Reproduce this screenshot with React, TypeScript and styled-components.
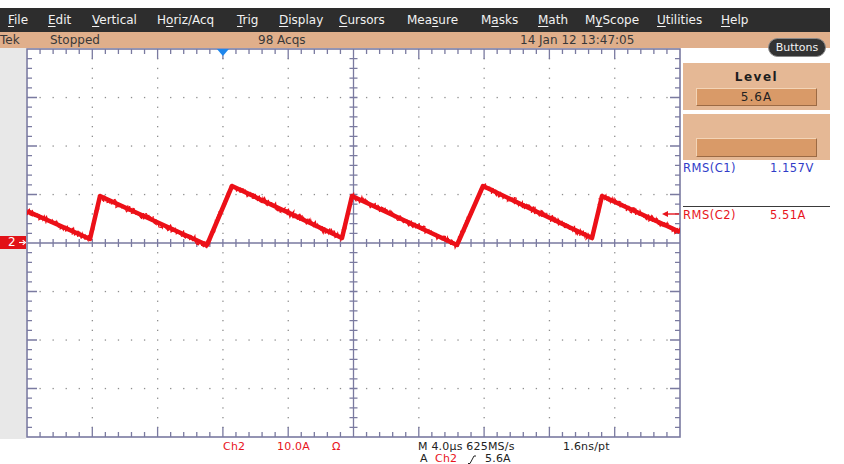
import React from "react";
import styled, { createGlobalStyle } from "styled-components";

const Global = createGlobalStyle`
  html, body { margin: 0; padding: 0; background: #ffffff; }
  body { font-family: "DejaVu Sans", "Liberation Sans", sans-serif; }
`;

const Page = styled.div`
  width: 844px;
  height: 464px;
  padding-top: 8px;
  box-sizing: border-box;
  overflow: hidden;
  display: flex;
  flex-direction: column;
  background: #ffffff;
`;

const MenuBar = styled.nav`
  width: 830px;
  height: 24px;
  flex: none;
  background: #2d2d2d;
  display: flex;
  align-items: center;
  padding-left: 8px;
  box-sizing: border-box;
`;

const MenuItem = styled.span<{ $w: number }>`
  width: ${(p) => p.$w}px;
  flex: none;
  color: #f2f2f2;
  font-size: 12px;
  line-height: 14px;
  white-space: nowrap;
  u {
    text-decoration: underline;
    text-underline-offset: 2px;
  }
`;

const StatusBar = styled.div`
  position: relative;
  width: 830px;
  height: 16px;
  flex: none;
  background: #e0af8b;
  display: flex;
  align-items: center;
  font-size: 12px;
  color: #383838;
`;

const StatusCell = styled.span<{ $w: number }>`
  width: ${(p) => p.$w}px;
  flex: none;
  white-space: nowrap;
  line-height: 14px;
`;

const ButtonsPill = styled.button`
  position: absolute;
  right: 4px;
  top: 6px;
  width: 58px;
  height: 19px;
  padding: 0;
  border-radius: 10px;
  border: 1px solid #8a8a8a;
  background: #333333;
  color: #f4f4f4;
  font-family: "DejaVu Sans", sans-serif;
  font-size: 11px;
  line-height: 17px;
  text-align: center;
  z-index: 2;
`;

const MainRow = styled.div`
  display: flex;
  height: 391px;
  flex: none;
`;

const Gutter = styled.div`
  position: relative;
  width: 26px;
  flex: none;
  background: #e8e8e8;
`;

const ChannelMarker = styled.div`
  position: absolute;
  left: 0;
  top: 188px;
  width: 26px;
  height: 13px;
  box-sizing: border-box;
  background: #e21218;
  color: #ffffff;
  font-size: 12px;
  line-height: 13px;
  display: flex;
  align-items: center;
  padding-left: 8px;
  gap: 3px;
`;

const ScopeSvg = styled.svg`
  display: block;
  flex: none;
`;

const SidePanel = styled.aside`
  width: 148px;
  flex: none;
  padding: 15px 0 0 1px;
  box-sizing: border-box;
  display: flex;
  flex-direction: column;
  background: #ffffff;
`;

const ControlBox = styled.div<{ $h: number; $pt: number; $mt: number }>`
  width: 147px;
  height: ${(p) => p.$h}px;
  margin-top: ${(p) => p.$mt}px;
  padding-top: ${(p) => p.$pt}px;
  box-sizing: border-box;
  background: #e5b895;
  display: flex;
  flex-direction: column;
  align-items: center;
`;

const BoxTitle = styled.div`
  font-weight: bold;
  font-size: 12px;
  line-height: 14px;
  letter-spacing: 1.5px;
  color: #1e1e1e;
  margin-bottom: 4px;
`;

const ValueBar = styled.div<{ $h: number }>`
  width: 121px;
  height: ${(p) => p.$h}px;
  box-sizing: border-box;
  background: #d99a68;
  border: 1px solid;
  border-color: #f3d4b6 #9c6a44 #9c6a44 #f3d4b6;
  font-size: 12px;
  letter-spacing: 1px;
  color: #222222;
  display: flex;
  align-items: center;
  justify-content: center;
`;

const MeasRow = styled.div<{ $color: string; $mt: number }>`
  display: grid;
  grid-template-columns: 87px auto;
  margin-top: ${(p) => p.$mt}px;
  font-size: 11.5px;
  line-height: 13px;
  letter-spacing: 0.5px;
  color: ${(p) => p.$color};
`;

const Divider = styled.div`
  width: 147px;
  height: 1px;
  margin-top: 31px;
  background: #3a3a3a;
`;

const Readout = styled.div`
  padding-top: 2px;
  display: flex;
  flex-direction: column;
`;

const ReadoutLine = styled.div<{ $cols: string }>`
  display: grid;
  grid-template-columns: ${(p) => p.$cols};
  font-size: 11px;
  line-height: 12px;
  letter-spacing: 0.2px;
  color: #222222;
  white-space: nowrap;
`;

const RedText = styled.span`
  color: #e8141c;
`;

const SlopeIcon = styled.svg`
  display: block;
  margin-top: 2px;
`;

/* ---------- graticule geometry ---------- */
const GX = 1;
const GY = 1;
const GW = 653;
const GH = 388;
const DW = GW / 10;
const DH = GH / 8;
const CX = GX + 5 * DW;
const CY = GY + 4 * DH;
const AXIS = "#7a7aa0";

const buildDots = () => {
  const dots: { x: number; y: number }[] = [];
  for (let j = 1; j < 8; j++) {
    if (j === 4) continue;
    for (let k = 1; k < 50; k++) dots.push({ x: GX + (k * DW) / 5, y: GY + j * DH });
  }
  for (let i = 1; i < 10; i++) {
    if (i === 5) continue;
    for (let m = 1; m < 40; m++) {
      if (m % 5 === 0) continue;
      dots.push({ x: GX + i * DW, y: GY + (m * DH) / 5 });
    }
  }
  return dots;
};

const buildTicks = () => {
  let d = "";
  for (let k = 1; k < 50; k++) {
    const x = GX + (k * DW) / 5;
    const len = k % 5 === 0 ? 10 : 5;
    d += `M${x} ${GY}v${len}M${x} ${GY + GH}v${-len}`;
    d += `M${x} ${CY - 4}v8`;
  }
  for (let m = 1; m < 40; m++) {
    const y = GY + (m * DH) / 5;
    const len = m % 5 === 0 ? 10 : 5;
    d += `M${GX} ${y}h${len}M${GX + GW} ${y}h${-len}`;
    d += `M${CX - 4} ${y}h8`;
  }
  d += `M${GX} ${CY}H${GX + GW}M${CX} ${GY}V${GY + GH}`;
  return d;
};

const TRACE: [number, number][] = [
  [1, 163],
  [64, 191],
  [74, 148],
  [181, 197],
  [206, 138],
  [316, 190],
  [326, 148],
  [431, 197],
  [457, 138],
  [566, 190],
  [576, 148],
  [654, 184],
];

let seed = 9731;
const rnd = () => {
  seed = (seed * 1103515245 + 12345) & 0x7fffffff;
  return seed / 0x7fffffff;
};

const buildFuzz = () => {
  const pts: string[] = [];
  for (let s = 0; s < TRACE.length - 1; s++) {
    const [x1, y1] = TRACE[s];
    const [x2, y2] = TRACE[s + 1];
    const len = Math.hypot(x2 - x1, y2 - y1);
    const n = Math.max(2, Math.round(len / 0.8));
    for (let i = 0; i < n; i++) {
      const t = i / n;
      const x = x1 + (x2 - x1) * t + (rnd() - 0.5) * 2;
      const y = y1 + (y2 - y1) * t + (rnd() - 0.5) * 7.5;
      pts.push(`${x.toFixed(1)},${y.toFixed(1)}`);
    }
  }
  return pts.join(" ");
};

const DOTS = buildDots();
const TICKS = buildTicks();
const FUZZ = buildFuzz();
const TRACE_PTS = TRACE.map(([x, y]) => `${x},${y}`).join(" ");

const Graticule: React.FC = () => (
  <ScopeSvg width={656} height={391} viewBox="0 0 656 391">
    <defs>
      <clipPath id="plotArea">
        <rect x={GX} y={GY} width={GW} height={GH} />
      </clipPath>
    </defs>
    <rect x={0} y={0} width={656} height={391} fill="#ffffff" />
    {DOTS.map((p, i) => (
      <rect key={i} x={p.x - 0.6} y={p.y - 0.6} width={1.3} height={1.3} fill="#8e8e8e" />
    ))}
    <path d={TICKS} stroke={AXIS} strokeWidth={1.3} fill="none" />
    <rect x={GX} y={GY} width={GW} height={GH} fill="none" stroke={AXIS} strokeWidth={1.6} />
    <g clipPath="url(#plotArea)">
      <polyline points={TRACE_PTS} fill="none" stroke="#ec1018" strokeWidth={4.5} strokeLinejoin="round" />
      <polyline points={FUZZ} fill="none" stroke="#ec1018" strokeWidth={1.2} />
    </g>
    <polygon points={`${GX + 3 * DW - 6},${GY} ${GX + 3 * DW + 6},${GY} ${GX + 3 * DW},${GY + 7}`} fill="#1e86ec" />
    <path d="M641 166H653" stroke="#e8141c" strokeWidth={1.4} />
    <polygon points="636,166 642,163 642,169" fill="#e8141c" />
  </ScopeSvg>
);

const MENU: { label: React.ReactNode; w: number }[] = [
  { label: <><u>F</u>ile</>, w: 40 },
  { label: <><u>E</u>dit</>, w: 44 },
  { label: <><u>V</u>ertical</>, w: 65 },
  { label: <>H<u>o</u>riz/Acq</>, w: 80 },
  { label: <><u>T</u>rig</>, w: 42 },
  { label: <><u>D</u>isplay</>, w: 60 },
  { label: <><u>C</u>ursors</>, w: 68 },
  { label: <>Mea<u>s</u>ure</>, w: 74 },
  { label: <>M<u>a</u>sks</>, w: 57 },
  { label: <><u>M</u>ath</>, w: 47 },
  { label: <>M<u>y</u>Scope</>, w: 72 },
  { label: <><u>U</u>tilities</>, w: 64 },
  { label: <><u>H</u>elp</>, w: 40 },
];

export default function App() {
  return (
    <>
      <Global />
      <Page>
        <MenuBar>
          {MENU.map((m, i) => (
            <MenuItem key={i} $w={m.w}>
              {m.label}
            </MenuItem>
          ))}
        </MenuBar>
        <StatusBar>
          <StatusCell $w={50}>Tek</StatusCell>
          <StatusCell $w={208}>Stopped</StatusCell>
          <StatusCell $w={262}>98 Acqs</StatusCell>
          <StatusCell $w={140}>14 Jan 12 13:47:05</StatusCell>
          <ButtonsPill>Buttons</ButtonsPill>
        </StatusBar>
        <MainRow>
          <Gutter>
            <ChannelMarker>
              <span>2</span>
              <svg width="8" height="7" viewBox="0 0 8 7">
                <path d="M0 3.5H6" stroke="#fff" strokeWidth={1.2} />
                <path d="M4 1L7 3.5L4 6" stroke="#fff" strokeWidth={1.2} fill="none" />
              </svg>
            </ChannelMarker>
          </Gutter>
          <Graticule />
          <SidePanel>
            <ControlBox $h={47} $pt={7} $mt={0}>
              <BoxTitle>Level</BoxTitle>
              <ValueBar $h={18}>5.6A</ValueBar>
            </ControlBox>
            <ControlBox $h={46} $pt={24} $mt={4}>
              <ValueBar $h={19} />
            </ControlBox>
            <MeasRow $color="#2f3cc8" $mt={2}>
              <span>RMS(C1)</span>
              <span>1.157V</span>
            </MeasRow>
            <Divider />
            <MeasRow $color="#e8141c" $mt={2}>
              <span>RMS(C2)</span>
              <span>5.51A</span>
            </MeasRow>
          </SidePanel>
        </MainRow>
        <Readout>
          <ReadoutLine $cols="223px 54px 55px 86px 145px auto">
            <span />
            <RedText>Ch2</RedText>
            <RedText>10.0A</RedText>
            <RedText>Ω</RedText>
            <span>M 4.0µs 625MS/s</span>
            <span>1.6ns/pt</span>
          </ReadoutLine>
          <ReadoutLine $cols="420px 15px 33px 17px auto">
            <span />
            <span>A</span>
            <RedText>Ch2</RedText>
            <SlopeIcon width="8" height="9" viewBox="0 0 8 9">
              <path d="M0 8.5H2L6 1H8" stroke="#222" strokeWidth={1} fill="none" />
            </SlopeIcon>
            <span>5.6A</span>
          </ReadoutLine>
        </Readout>
      </Page>
    </>
  );
}
